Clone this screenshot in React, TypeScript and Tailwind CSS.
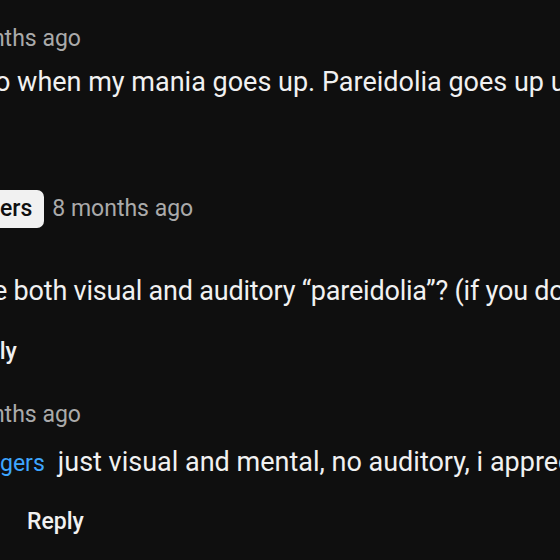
export default function App() {
  return (
    <div className="w-[560px] h-[560px] overflow-hidden bg-[#0f0f0f] font-['Roboto',sans-serif] whitespace-nowrap">
      <div className="pt-[23px] -ml-[60px] text-[23px] leading-[32px] text-[#aaaaaa]">
        8 months ago
      </div>
      <div className="mt-[9px] -ml-[5px] text-[27px] leading-[36px] text-[#f1f1f1]">
        o when my mania goes up. Pareidolia goes up usually too.
      </div>

      <div className="mt-[90px] flex items-center h-[38px]">
        <span className="-ml-[12px] h-[38px] flex items-center px-3 rounded-[7px] bg-[#f1f1f1] text-[#0f0f0f] text-[23px] font-medium">
          ers
        </span>
        <span className="ml-[8px] text-[23px] text-[#aaaaaa]">8 months ago</span>
      </div>
      <div className="mt-[45px] -ml-[7px] text-[27px] leading-[36px] tracking-[-0.2px] text-[#f1f1f1]">
        e both visual and auditory “pareidolia”? (if you don't mind me asking)
      </div>
      <div className="mt-[27px] -ml-[40px] text-[23px] leading-[32px] font-medium text-[#f1f1f1]">
        Reply
      </div>

      <div className="mt-[31px] -ml-[60px] text-[23px] leading-[32px] text-[#aaaaaa]">
        8 months ago
      </div>
      <div className="mt-[13px] flex items-baseline text-[#f1f1f1]">
        <span className="text-[23px] leading-[36px] text-[#3ea6ff]">gers</span>
        <span className="ml-[13px] text-[27px] leading-[36px]">
          just visual and mental, no auditory, i appreciate you asking
        </span>
      </div>
      <div className="mt-[24px] ml-[27px] text-[23px] leading-[32px] font-medium text-[#f1f1f1]">
        Reply
      </div>
    </div>
  );
}
